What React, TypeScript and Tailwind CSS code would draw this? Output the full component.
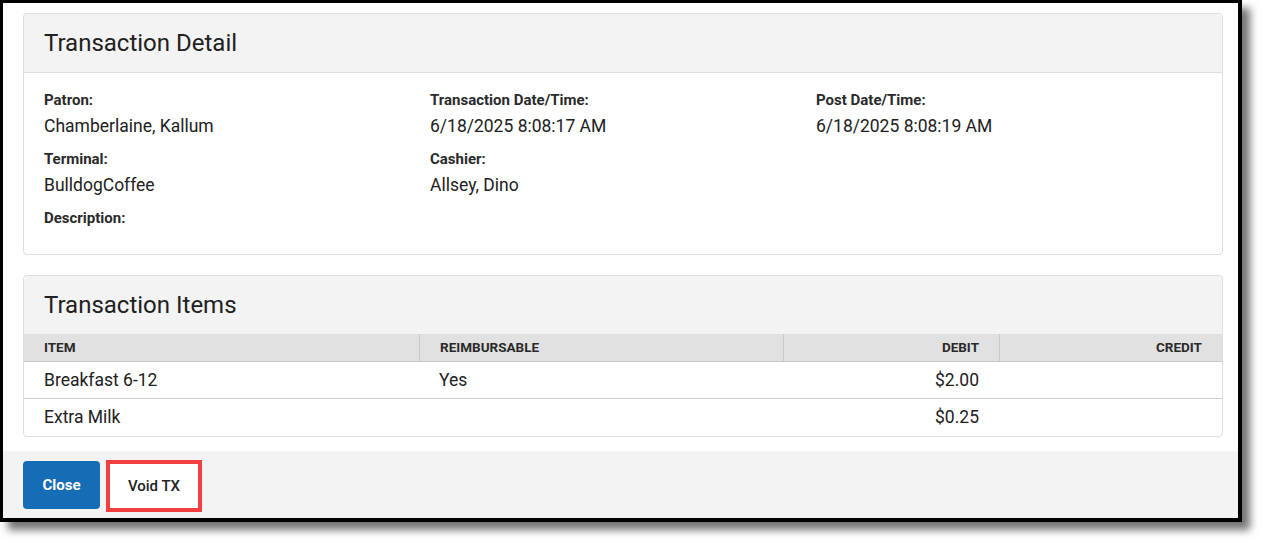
const font = { fontFamily: "Roboto, 'Noto Sans', sans-serif" };

const fields = [
  { label: "Patron:", value: "Chamberlaine, Kallum" },
  { label: "Transaction Date/Time:", value: "6/18/2025 8:08:17 AM" },
  { label: "Post Date/Time:", value: "6/18/2025 8:08:19 AM" },
  { label: "Terminal:", value: "BulldogCoffee" },
  { label: "Cashier:", value: "Allsey, Dino" },
  { label: "", value: "" },
  { label: "Description:", value: "" },
];

const items = [
  { item: "Breakfast 6-12", reimb: "Yes", debit: "$2.00", credit: "" },
  { item: "Extra Milk", reimb: "", debit: "$0.25", credit: "" },
];

const cols = "grid grid-cols-[395px_364px_216px_1fr]";

function Field({ label, value }: { label: string; value: string }) {
  if (!label) return <div />;
  return (
    <div>
      <div className="text-[15px] font-bold leading-[18px] text-[#2a2a2a]">{label}</div>
      {value ? (
        <div className="mt-[5px] text-[17.5px] leading-[24px] text-[#212121]">{value}</div>
      ) : null}
    </div>
  );
}

export default function App() {
  return (
    <div className="h-[545px] w-[1267px] bg-white" style={font}>
      <div className="flex h-[522px] w-[1242px] flex-col border-b-4 border-l-[3px] border-r-4 border-t-[3px] border-black bg-white shadow-[8px_8px_8px_rgba(0,0,0,0.55)]">
        <div className="flex-1 pl-5 pr-[15px] pt-[10px]">
          <section className="rounded-[4px] border border-[#dedede]">
            <div className="flex h-[59px] items-center rounded-t-[4px] border-b border-[#dedede] bg-[#f3f3f3] px-5">
              <h2 className="text-[24px] leading-none text-[#212121]">Transaction Detail</h2>
            </div>
            <div className="grid grid-cols-3 gap-x-0 gap-y-[12px] px-5 pb-[27px] pt-[18px]">
              {fields.map((f, i) => (
                <Field key={i} label={f.label} value={f.value} />
              ))}
            </div>
          </section>

          <section className="mt-[20px] overflow-hidden rounded-[4px] border border-[#dedede]">
            <div className="flex h-[58px] items-center bg-[#f3f3f3] px-5">
              <h2 className="text-[24px] leading-none text-[#212121]">Transaction Items</h2>
            </div>
            <div className={`${cols} h-[28px] items-center border-b border-[#c8c8c8] bg-[#e1e1e1] text-[13.5px] font-bold uppercase text-[#2a2a2a]`}>
              <div className="px-5">Item</div>
              <div className="flex h-full items-center border-l border-[#c9c9c9] px-5">Reimbursable</div>
              <div className="flex h-full items-center justify-end border-l border-[#c9c9c9] px-5">Debit</div>
              <div className="flex h-full items-center justify-end border-l border-[#c9c9c9] px-5">Credit</div>
            </div>
            {items.map((r, i) => (
              <div
                key={r.item}
                className={`${cols} h-[37px] items-center text-[17.5px] text-[#212121] ${i === 0 ? "border-b border-[#cfcfcf]" : ""}`}
              >
                <div className="px-5">{r.item}</div>
                <div className="px-5">{r.reimb}</div>
                <div className="px-5 text-right">{r.debit}</div>
                <div className="px-5 text-right">{r.credit}</div>
              </div>
            ))}
          </section>
        </div>

        <div className="flex h-[67px] items-start gap-[6px] bg-[#f3f3f3] pl-5 pt-[9px]">
          <button className="mt-[1px] h-[48px] w-[77px] rounded-[4px] bg-[#166db5] text-[15px] font-bold text-white">
            Close
          </button>
          <button className="h-[52px] w-[96px] border-4 border-[#f1403f] bg-white text-[15px] font-medium text-[#222]">
            Void TX
          </button>
        </div>
      </div>
    </div>
  );
}
